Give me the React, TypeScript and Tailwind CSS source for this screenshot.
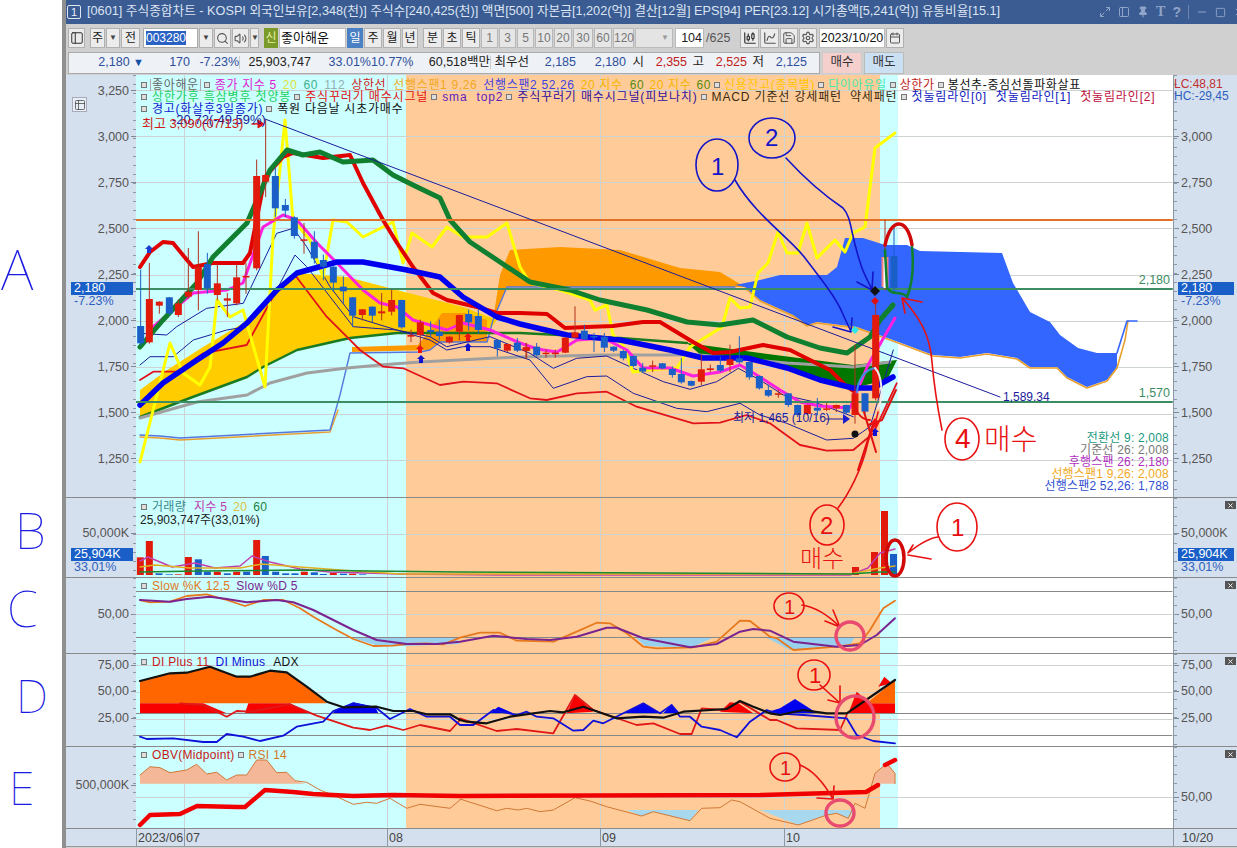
import type { ReactNode } from "react";
import { CandlestickChart, ChartSpline, Calendar, Maximize2, Minus, PanelLeft, Pin, Save, Search, Settings, Square, Table2, Volume2, X } from "lucide-react";

type Candle = [number, number, number, number, number, string];

// zoom crop coords -> page coords
const z = (ox: number, oy: number, pts: number[][]) =>
  pts.map(([x, y]) => `${(x / 3 + ox).toFixed(1)},${(y / 3 + oy).toFixed(1)}`).join(" ");

const RED = "#e21a0c";
const BLUE = "#1a5fc8";

// x(zoom), bodyTop, bodyBot, wickTop, wickBot
const candles3: Candle[] = [
  [32, 618, 670, 450, 675, BLUE], [58, 537, 667, 430, 670, RED], [88, 545, 557, 545, 580, RED], [118, 532, 580, 532, 585, BLUE],
  [145, 550, 585, 540, 590, RED], [175, 515, 530, 385, 535, RED], [205, 440, 510, 335, 570, RED], [232, 432, 505, 400, 520, BLUE],
  [262, 490, 525, 430, 540, RED], [292, 535, 542, 520, 590, RED], [320, 472, 550, 435, 555, RED], [348, 468, 472, 430, 520, RED],
  [380, 168, 445, 120, 450, RED], [407, 165, 185, 0, 230, RED], [436, 168, 265, 145, 290, BLUE], [466, 255, 272, 238, 290, BLUE],
  [493, 292, 348, 290, 355, BLUE], [522, 358, 362, 310, 400, RED], [553, 365, 415, 335, 430, BLUE], [580, 420, 440, 405, 480, BLUE],
  [610, 440, 488, 440, 515, BLUE], [640, 500, 514, 470, 550, BLUE], [668, 532, 587, 532, 620, BLUE], [697, 568, 585, 568, 600, RED],
  [727, 560, 587, 560, 605, BLUE], [755, 574, 580, 520, 600, RED], [785, 540, 575, 510, 585, RED], [815, 540, 622, 540, 625, BLUE],
  [843, 645, 650, 630, 665, RED], [871, 607, 645, 600, 680, RED], [902, 630, 636, 605, 650, BLUE], [928, 635, 648, 600, 660, BLUE],
  [958, 650, 667, 650, 670, RED], [988, 585, 635, 585, 660, RED], [1016, 582, 607, 570, 630, BLUE], [1045, 588, 630, 570, 640, BLUE],
  [1102, 660, 685, 660, 708, BLUE], [1132, 672, 692, 672, 695, RED], [1162, 668, 692, 655, 695, BLUE], [1190, 682, 692, 670, 715, RED],
];
const candles7: Candle[] = [
  [18, 142, 152, 130, 175, RED], [50, 140, 165, 130, 168, BLUE], [78, 158, 162, 150, 172, RED], [106, 158, 162, 150, 172, RED],
  [136, 113, 158, 113, 158, RED], [165, 97, 113, 20, 113, RED], [193, 92, 118, 75, 118, BLUE], [222, 108, 112, 100, 155, BLUE],
  [253, 110, 143, 100, 155, BLUE], [281, 140, 152, 140, 155, BLUE], [310, 153, 175, 150, 180, BLUE], [340, 168, 198, 168, 200, BLUE],
  [368, 203, 215, 190, 218, BLUE], [398, 196, 200, 183, 215, RED], [427, 190, 205, 190, 207, BLUE], [457, 207, 225, 200, 232, BLUE],
  [484, 222, 247, 175, 250, BLUE], [514, 243, 257, 243, 258, BLUE], [544, 208, 245, 165, 255, RED], [571, 205, 210, 195, 215, RED],
  [601, 195, 212, 170, 215, BLUE], [630, 178, 195, 135, 215, RED], [658, 175, 187, 110, 190, BLUE], [688, 186, 232, 186, 238, BLUE],
  [718, 228, 265, 228, 268, BLUE], [745, 270, 287, 255, 290, BLUE], [775, 280, 284, 270, 292, RED], [805, 280, 315, 280, 320, BLUE],
  [833, 315, 345, 315, 350, BLUE], [862, 315, 342, 315, 345, RED], [892, 323, 332, 295, 345, BLUE], [920, 325, 329, 310, 332, RED],
  [949, 315, 325, 315, 335, RED], [979, 315, 338, 315, 340, BLUE], [1005, 280, 345, 135, 370, RED], [1035, 280, 335, 280, 345, BLUE],
  [1067, 45, 295, 0, 300, RED],
];
const vols: [number, number, string][] = [
  [241, 187, RED], [268, 138, RED], [297, 235, BLUE], [328, 238, BLUE], [355, 238, RED], [385, 186, RED], [415, 193, BLUE], [442, 230, BLUE],
  [472, 230, RED], [502, 235, BLUE], [530, 230, RED], [560, 230, BLUE], [590, 135, RED], [616, 183, BLUE], [647, 230, BLUE], [677, 235, BLUE],
  [705, 235, BLUE], [733, 230, RED], [763, 232, BLUE], [790, 237, BLUE], [820, 233, RED], [850, 236, BLUE], [878, 236, RED], [908, 238, BLUE],
];

const redThick = "140,267 150,252 163,242 173,243 187,260 193,267 213,263 243,263 250,253 265,177 283,157 293,153 323,158 350,155 363,183 383,220 397,243 413,267 433,293 447,300 477,307 497,313 520,313 547,314 565,328 587,327 613,326 643,322 660,322 693,342 713,353 730,352 763,345 790,350 830,370 845,385 855,392";
const greenThick = "140,347 163,320 197,283 213,257 247,223 270,170 287,150 303,155 320,152 343,162 373,160 393,175 413,185 440,198 450,220 470,242 497,260 530,282 570,290 600,300 647,310 687,322 720,325 753,320 787,337 820,348 847,353 870,337 880,320 893,305";
const blueThick = "140,405 163,383 197,360 223,343 247,323 277,290 297,273 337,262 363,262 407,270 440,277 463,297 497,317 520,324 567,335 620,340 670,350 703,358 747,358 787,368 820,380 853,388 873,388 893,377";
const magenta = "153,327 173,310 193,293 227,290 243,283 263,227 283,215 297,220 317,243 337,263 363,290 380,303 397,307 413,320 447,330 463,323 490,330 520,343 537,349 557,352 577,340 603,338 627,350 643,368 670,368 693,376 720,372 740,365 760,377 780,390 800,402 820,406 850,408 868,365 895,318";
const yellow = "140,462 170,343 183,373 200,385 210,367 217,300 230,317 243,310 265,387 273,237 285,120 293,220 310,240 323,277 333,220 347,222 363,237 393,222 403,263 412,233 432,247 447,227 463,237 487,237 507,223 520,267 530,283 560,290 590,300 595,310 607,305 613,335 623,345 633,372 647,370 677,368 690,347 722,327 730,298 740,308 750,307 758,273 768,263 778,232 787,253 798,253 807,223 817,258 835,240 845,252 853,233 865,227 875,148 895,133";

const Kd = {
  k: z(60, 495, [[240, 315], [270, 322], [330, 320], [380, 303], [440, 298], [500, 315], [555, 333], [610, 315], [670, 315], [720, 340], [760, 365], [820, 400], [880, 432], [940, 453], [1000, 452], [1040, 447], [1100, 445], [1150, 448], [1200, 428]]) + " " + z(450, 495, [[90, 413], [150, 413], [200, 437], [310, 440], [380, 410], [440, 383], [480, 385], [530, 415], [580, 455], [620, 460], [730, 457], [800, 440], [870, 377], [900, 378], [960, 425]]) + " " + z(760, 495, [[50, 430], [100, 465], [230, 455], [300, 445], [330, 405], [370, 340], [405, 317]]),
  d: z(60, 495, [[240, 315], [330, 320], [380, 312], [450, 305], [500, 312], [560, 322], [650, 315], [700, 322], [760, 345], [820, 375], [880, 405], [950, 435], [1040, 447], [1130, 447], [1200, 440]]) + " " + z(450, 495, [[130, 422], [230, 432], [300, 435], [380, 425], [470, 398], [500, 398], [580, 430], [720, 457], [800, 447], [870, 410], [910, 402], [960, 407]]) + " " + z(760, 495, [[100, 440], [230, 455], [300, 450], [350, 420], [405, 370]]),
};
const Di = {
  adx: z(60, 495, [[240, 558], [330, 535], [380, 533], [450, 515], [530, 545], [570, 545], [630, 527], [680, 532], [740, 575], [800, 620], [850, 637], [950, 635], [1000, 648], [1060, 648], [1100, 658], [1170, 658], [1200, 675]]) + " " + z(450, 495, [[50, 680], [110, 685], [180, 665], [300, 648], [340, 652], [400, 635], [500, 670], [580, 665], [640, 668], [700, 650], [830, 642], [870, 618], [910, 635], [960, 655]]) + " " + z(760, 495, [[60, 660], [130, 645], [200, 655], [260, 655], [340, 600], [405, 555]]),
  plus: z(60, 495, [[360, 625], [430, 630], [500, 665], [530, 648], [570, 650], [690, 628], [770, 662], [880, 698], [930, 705], [980, 692], [1030, 705], [1080, 690], [1170, 708], [1200, 675]]) + " " + z(450, 495, [[30, 670], [140, 708], [200, 702], [310, 715], [375, 600], [430, 645], [560, 690], [610, 685], [690, 717], [725, 717], [755, 640], [820, 645], [870, 620], [960, 675]]) + " " + z(760, 495, [[50, 675], [110, 700], [240, 705], [260, 660]]),
  minus: z(60, 495, [[240, 725], [260, 732], [340, 730], [430, 741], [470, 741], [500, 717], [550, 725], [600, 738], [670, 722], [710, 695], [790, 680], [820, 648], [880, 625], [950, 640], [990, 672], [1050, 642], [1100, 665], [1170, 665], [1200, 690]]) + " " + z(450, 495, [[40, 690], [70, 690], [130, 645], [200, 660], [230, 650], [260, 665], [310, 670], [370, 707], [400, 705], [430, 677], [460, 685], [520, 655], [580, 625], [630, 655], [665, 630], [690, 665], [720, 665], [755, 695], [810, 705], [860, 727], [900, 680], [950, 645]]) + " " + z(760, 495, [[50, 655], [130, 660], [260, 670], [290, 720], [340, 738], [405, 745]]),
};
const rsi = z(60, 495, [[240, 840], [270, 815], [300, 818], [330, 833], [380, 825], [410, 808], [440, 837], [470, 832], [500, 855], [530, 840], [560, 840], [590, 795], [620, 795], [650, 833], [680, 832], [705, 857], [740, 862], [780, 885], [830, 905], [880, 928], [920, 922], [950, 925], [990, 910], [1040, 940], [1080, 928], [1170, 940], [1200, 915]]) + " " + z(450, 495, [[30, 912], [140, 947], [170, 940], [205, 945], [230, 940], [270, 950], [310, 945], [375, 908], [420, 918], [470, 935], [575, 963], [610, 950], [720, 977], [755, 940], [810, 938], [845, 915], [870, 920], [960, 970]]) + " " + z(760, 495, [[115, 990], [200, 960], [230, 955], [265, 970], [285, 925], [315, 940], [345, 835], [380, 805], [405, 835], [405, 866]]);

function Grid({ ys }: { ys: number[] }) {
  return (
    <g stroke="#cdd3d3" strokeWidth="1">
      {ys.map((y) => <line key={y} x1="136" x2="1172" y1={y + 0.5} y2={y + 0.5} />)}
      {[184, 387, 600, 784].map((x) => <line key={x} x1={x + 0.5} x2={x + 0.5} y1="0" y2="848" />)}
    </g>
  );
}

function Bands() {
  return (
    <div className="absolute inset-0 flex">
      <div className="w-[270px] bg-[#ccffff]" />
      <div className="w-[474px] bg-[#ffcc99]" />
      <div className="w-[18px] bg-[#ccffff]" />
      <div className="flex-1 bg-white" />
    </div>
  );
}

function Axis({ labels, pt, step, right }: { labels: string[]; pt: number; step: number; right?: boolean }) {
  return (
    <div className={right ? "relative flex h-full w-[64px] border-l border-[#8c98a6] bg-[#d5e0ee]" : "relative flex h-full w-[70px] justify-end bg-[#d5e0ee]"}>
      <div className={right ? "flex flex-col" : "flex flex-col items-end"} style={{ paddingTop: pt }}>
        {labels.map((l) => (
          <div key={l} className="flex h-[16px] items-center text-[12.5px] leading-none text-[#555]" style={{ marginBottom: step - 16 }}>
            {right && <span className="mr-[2px] h-px w-[5px] bg-[#7c8894]" />}
            {l}
            {!right && <span className="ml-[2px] h-px w-[5px] bg-[#7c8894]" />}
          </div>
        ))}
      </div>
      <div className={(right ? "left-0" : "right-0") + " absolute top-0 h-full w-[3px] bg-[repeating-linear-gradient(to_bottom,#8c98a6_0,#8c98a6_1px,transparent_1px,transparent_9px)]"} />
    </div>
  );
}

function Close() {
  return (
    <span className="absolute right-[1px] top-[3px] grid h-[8px] w-[11px] place-items-center bg-[#555]">
      <X className="h-[7px] w-[7px] text-white" strokeWidth={3} />
    </span>
  );
}

function Price({ v, sub, top }: { v: string; sub: string; top: number }) {
  return (
    <div className="absolute left-[5px] right-[3px] text-[12.5px] leading-[13px]" style={{ top }}>
      <div className="bg-[#1a5fc8] pl-[3px] text-white">{v}</div>
      <div className="pl-[3px] text-[#2d5fc0]">{sub}</div>
    </div>
  );
}

function Pane({ top, h, left, right, overlay, children }: { top: number; h: number; left: ReactNode; right: ReactNode; overlay?: ReactNode; children: ReactNode }) {
  return (
    <div className="flex border-b border-[#8a8a8a]" style={{ height: h }}>
      {left}
      <div className="relative min-w-0 flex-1 overflow-hidden">
        <Bands />
        <svg className="absolute left-0 top-0" width="1037" height={h} viewBox={`136 ${top} 1037 ${h}`} fill="none" strokeLinejoin="round" strokeLinecap="round">
          {children}
        </svg>
        {overlay}
      </div>
      {right}
    </div>
  );
}

function Candles() {
  const draw = (c: Candle, ox: number, oy: number) => {
    const x = c[0] / 3 + ox;
    return (
      <g key={`${ox}-${c[0]}`}>
        <line x1={x} x2={x} y1={c[3] / 3 + oy} y2={c[4] / 3 + oy} stroke={c[5] === RED ? "#b03020" : "#1a5fc8"} />
        <rect x={x - 3.5} y={c[1] / 3 + oy} width="7" height={Math.max(1.5, (c[2] - c[1]) / 3)} fill={c[5]} />
      </g>
    );
  };
  return (
    <>
      {candles3.map((c) => draw(c, 130, 120))}
      {candles7.map((c) => draw(c, 520, 300))}
      <line x1="885" x2="885" y1="220" y2="290" stroke="#b03020" />
      <rect x="881.5" y="257" width="7" height="30" fill="#f08080" />
      <rect x="883.5" y="258" width="3" height="30" fill="#fff" />
      <line x1="894" x2="894" y1="228" y2="292" stroke="#1a5fc8" />
      <rect x="890.5" y="256" width="7" height="32" fill="#1a5fc8" />
    </>
  );
}

function Mark({ x, y, c }: { x: number; y: number; c: string }) {
  return <path d={`M${x} ${y - 5}L${x + 4} ${y - 1}H${x + 2}V${y + 3}H${x - 2}V${y - 1}H${x - 4}Z`} fill={c} />;
}

function MainChart() {
  return (
    <>
      <Grid ys={[90, 136, 182, 228, 275, 321, 367, 414, 460]} />
      <polygon fill="#ffcc00" points="140,390 167,370 203,347 243,323 277,290 297,273 347,277 397,290 463,307 497,320 487,333 397,333 350,338 297,350 263,367 247,377 190,398 140,417" />
      <polygon fill="#ff9900" points="352,347 418,345 432,327 442,313 465,313 487,320 487,342 440,342 430,350 352,352" />
      <polygon fill="#ff9900" points="493,320 500,275 510,250 560,247 620,250 680,268 720,272 745,287 507,287" />
      <polygon fill="#3366ff" points="735,285 760,280 780,275 827,275 837,267 845,238 863,238 885,245 907,245 920,251 1002,253 1013,283 1030,312 1050,322 1060,335 1078,348 1097,353 1117,353 1117,367 1107,380 1087,387 1067,377 1057,367 1030,367 1017,358 987,353 960,357 933,355 893,340 857,327 817,322 807,325 793,315 760,300 745,287" />
      <polyline stroke="#e8a030" strokeWidth="1.6" points="745,288 760,301 793,316 807,326 817,323 857,328 893,341 933,356 960,358 987,354 1017,359 1030,368 1057,368 1067,378 1087,388 1107,381 1117,368 1125,340 1128,321" />
      <polyline stroke="#3366ff" strokeWidth="1.6" points="1117,353 1127,321 1137,321" />
      <polyline stroke="#e8a030" strokeWidth="1.4" points="140,437 160,438 180,440 330,432 338,410" />
      <polyline stroke="#5577dd" strokeWidth="1.4" points="140,435 160,436 180,438 330,430 340,395 350,353 420,352 430,350 440,342 487,342 493,320 507,287 735,287" />
      <polygon fill="#007700" points="687,343 753,352 853,365 897,360 887,380 853,388 787,368 747,358 703,357" />
      <polyline stroke="#1a7a20" strokeWidth="2.5" points="140,417 190,398 247,377 263,367 297,350 350,338 397,333 487,333 520,333 620,338 687,343" />
      <polyline stroke="#a0a0a0" strokeWidth="3" points="140,418 197,402 247,395 270,383 307,373 347,368 380,365 420,362 497,358 520,357 600,355 700,355 753,360 787,363 853,367 890,362" />
      <polyline stroke="#1c1c9c" strokeWidth="1" points={z(130, 120, [[30, 640], [110, 645], [140, 620], [230, 565], [340, 550], [440, 340], [490, 325], [530, 380], [600, 500], [670, 590], [800, 630], [900, 650], [950, 680], [1080, 650], [1200, 700]]) + " " + z(520, 300, [[100, 205], [170, 175], [260, 168], [340, 205], [430, 245], [510, 268], [590, 245], [655, 205], [720, 240], [790, 285], [880, 305], [1000, 350]])} />
      <polyline stroke="#1c1c9c" strokeWidth="1" points={z(130, 120, [[30, 735], [60, 710], [130, 710], [190, 660], [290, 630], [350, 620], [440, 510], [495, 405], [530, 440], [600, 530], [670, 620], [800, 630], [900, 660], [950, 690], [1000, 680], [1080, 680], [1200, 720]]) + " " + z(520, 300, [[100, 265], [200, 230], [260, 228], [340, 280], [470, 325], [560, 335], [660, 310], [720, 345], [800, 370], [920, 420], [1000, 415], [1050, 380], [1120, 150]])} />
      <polyline stroke="#e2121c" strokeWidth="1.8" points={z(130, 120, [[30, 780], [70, 755], [140, 755], [220, 700], [350, 675], [440, 510], [495, 465], [590, 590], [650, 650], [690, 690], [760, 740], [820, 745], [930, 795], [1000, 785], [1100, 790], [1200, 835]]) + " " + z(520, 300, [[80, 300], [170, 280], [260, 275], [350, 320], [520, 370], [600, 368], [680, 345], [750, 370], [840, 435], [920, 452], [1000, 450], [1060, 400], [1130, 250]])} />
      <polyline stroke="#ffff00" strokeWidth="3" points={yellow} />
      <polyline stroke="#e00000" strokeWidth="4" points={redThick} />
      <polyline stroke="#ff20e0" strokeWidth="3" points={magenta} />
      <polyline stroke="#108030" strokeWidth="5" points={greenThick} />
      <polyline stroke="#0000ee" strokeWidth="5.5" points={blueThick} />
      <line x1="136" x2="1172" y1="220" y2="220" stroke="#e0702a" strokeWidth="2" />
      <line x1="136" x2="1172" y1="289" y2="289" stroke="#3c8c64" strokeWidth="2" />
      <line x1="136" x2="1172" y1="402" y2="402" stroke="#3c8c64" strokeWidth="2" />
      <line x1="265" y1="119" x2="1000" y2="397" stroke="#1c1c9c" />
      <Candles />
      <Mark x={149} y={250} c="#1a3fd0" />
      <Mark x={420} y={350} c="#f01010" />
      <Mark x={421} y={360} c="#1010d0" />
      <Mark x={468} y={338} c="#f01010" />
      <Mark x={468} y={348} c="#1010d0" />
      <path d="M252 124H258V120L264 124L258 128V124Z" fill="#e01010" stroke="#e01010" />
      <line x1="826" y1="419" x2="846" y2="419" stroke="#1c1c9c" />
      <path d="M843 414L850 419L843 424Z" fill="#1c1cd0" />
    </>
  );
}

function Dot() {
  return <span className="mx-[3px] inline-block h-[6px] w-[6px] shrink-0 border border-[#777] bg-[#ddd]" />;
}

function Tag({ c, children, ml = 6 }: { c: string; children: ReactNode; ml?: number }) {
  return <span style={{ color: c, marginLeft: ml }}>{children}</span>;
}

function Row({ children, tracking = "tracking-[0.3px]" }: { children: ReactNode; tracking?: string }) {
  return <div className={"flex h-[12px] items-center whitespace-nowrap text-[12px] leading-[12px] " + tracking}>{children}</div>;
}

function MainLegend() {
  return (
    <>
      <div className="absolute left-[2px] top-[4px] flex flex-col">
        <Row tracking="tracking-[0.65px]">
          <Dot />
          <span className="border-x border-[#aaa] px-[1px] text-[#666]">좋아해운</span>
          <Dot />
          <Tag c="#e020d0" ml={2}>종가 지수 5</Tag>
          <Tag c="#e0e040">20</Tag>
          <Tag c="#40b090">60</Tag>
          <Tag c="#90b0b0">112</Tag>
          <Tag c="#d02020">상한선</Tag>
          <Tag c="#f0a820" ml={7}>선행스팬1 9,26</Tag>
          <Tag c="#4040e0" ml={6}>선행스팬2 52,26</Tag>
          <Tag c="#f5b400" ml={6}>20 지수</Tag>
          <Tag c="#5a8a10" ml={7}>60</Tag>
          <Tag c="#f5b400" ml={5}>20 지수</Tag>
          <Tag c="#5a8a10" ml={5}>60</Tag>
          <Dot />
          <Tag c="#ffc400" ml={1}>신용잔고(종목별)</Tag>
          <Dot />
          <Tag c="#40e8b0" ml={1}>다이아유일</Tag>
          <Dot />
          <Tag c="#c02020" ml={1}>상한가</Tag>
          <Dot />
          <Tag c="#111" ml={1}>봉선추-중심선돌파화살표</Tag>
        </Row>
        <Row tracking="tracking-[0.85px]">
          <Dot />
          <Tag c="#20d060" ml={2}>상한가후 흑삼병후 첫양봉</Tag>
          <Dot />
          <Tag c="#e01010" ml={2}>주식꾸러기 매수시그널</Tag>
          <Dot />
          <Tag c="#6020c0" ml={2}>sma</Tag>
          <Tag c="#6020c0" ml={9}>top2</Tag>
          <Dot />
          <Tag c="#3010a0" ml={2}>주식꾸러기 매수시그널(피보나치)</Tag>
          <Dot />
          <Tag c="#3a2a10" ml={2}>MACD 기준선 강세패턴</Tag>
          <Tag c="#3a2a10" ml={8}>약세패턴</Tag>
          <Dot />
          <Tag c="#1020c0" ml={2}>첫눌림라인[0]</Tag>
          <Tag c="#1020c0" ml={9}>첫눌림라인[1]</Tag>
          <Tag c="#c01040" ml={9}>첫눌림라인[2]</Tag>
        </Row>
        <Row tracking="tracking-[0.75px]">
          <Dot />
          <Tag c="#1020d0" ml={2}>경고(화살후3일종가)</Tag>
          <Dot />
          <Tag c="#111" ml={2}>폭원 다음날 시초가매수</Tag>
        </Row>
      </div>
      <span className="absolute left-[36px] top-[38px] whitespace-nowrap text-[13px] leading-none text-[#1c1c9c]">-20.72(-49.59%)</span>
      <span className="absolute left-[6px] top-[42px] whitespace-nowrap text-[13px] leading-none text-[#d01818]">최고 3,090(07/13)</span>
      <span className="absolute left-[597px] top-[337px] whitespace-nowrap text-[12px] leading-none text-[#1c1c9c]">최저 1,465 (10/16)</span>
      <span className="absolute left-[867px] top-[316px] whitespace-nowrap text-[12px] leading-none text-[#1c1c9c]">1,589.34</span>
      <span className="absolute right-[3px] top-[199px] text-[12.5px] leading-none text-[#3c8c64]">2,180</span>
      <span className="absolute right-[3px] top-[312px] text-[12.5px] leading-none text-[#3c8c64]">1,570</span>
      <div className="absolute bottom-[5px] right-[4px] flex flex-col items-end whitespace-nowrap text-[12px] leading-[12px] tracking-[0.2px]">
        <span className="text-[#1a9a80]">전환선 9: 2,008</span>
        <span className="text-[#777]">기준선 26: 2,008</span>
        <span className="text-[#b030c0]">후행스팬 26: 2,180</span>
        <span className="text-[#f0a820]">선행스팬1 9,26: 2,008</span>
        <span className="text-[#3050d0]">선행스팬2 52,26: 1,788</span>
      </div>
    </>
  );
}

function Btn({ w, children, active, dim }: { w: number; children?: ReactNode; active?: boolean; dim?: boolean }) {
  return (
    <div
      className={
        "grid h-[20px] shrink-0 place-items-center border text-[12px] leading-none " +
        (active ? "border-[#4a7fc0] bg-[#4a80c4] text-white" : dim ? "border-[#b8b8b8] bg-[#e6e6e6] text-[#777]" : "border-[#b0b0b0] bg-[#ececec] text-[#222]")
      }
      style={{ width: w }}
    >
      {children}
    </div>
  );
}

const Tri = () => <span className="text-[8px] leading-none text-[#444]">▼</span>;

function Toolbar() {
  return (
    <div className="flex h-[26px] items-center gap-[1px] bg-[#d0d0d0] pl-[2px] pt-[2px]">
      <Btn w={17}><PanelLeft className="h-[14px] w-[14px]" strokeWidth={1.6} /></Btn>
      <div className="w-[3px]" />
      <Btn w={15}>주</Btn>
      <Btn w={14}><Tri /></Btn>
      <Btn w={19}>전</Btn>
      <div className="ml-[2px] flex h-[20px] w-[55px] items-center border border-[#aaa] bg-white pl-[2px] text-[12px]"><span className="bg-[#2a62c4] leading-[14px] text-white">003280</span></div>
      <Btn w={14}><Tri /></Btn>
      <Btn w={17}><Search className="h-[13px] w-[13px] text-[#555]" /></Btn>
      <Btn w={17}><Volume2 className="h-[13px] w-[13px] text-[#555]" /></Btn>
      <Btn w={9}><Tri /></Btn>
      <div className="ml-[4px] grid h-[20px] w-[14px] place-items-center bg-[#7a9a2a] text-[12px] text-[#e8f0a0]">신</div>
      <div className="flex h-[20px] w-[67px] items-center border border-[#bbb] bg-white pl-[1px] text-[13px] text-[#111]">좋아해운</div>
      <Btn w={16} active>일</Btn>
      <Btn w={18}>주</Btn>
      <Btn w={18}>월</Btn>
      <Btn w={16}>년</Btn>
      <div className="w-[3px]" />
      <Btn w={19}>분</Btn>
      <Btn w={18}>초</Btn>
      <Btn w={18}>틱</Btn>
      {[["1", 17], ["3", 17], ["5", 17], ["10", 18], ["20", 18], ["30", 20], ["60", 18], ["120", 21]].map(([t, w]) => (
        <Btn key={t} w={w as number} dim>{t}</Btn>
      ))}
      <div className="flex h-[20px] w-[38px] items-center justify-end border border-[#bbb] bg-[#e4e4e4] pr-[3px]"><span className="text-[8px] text-[#999]">▼</span></div>
      <div className="ml-[1px] flex h-[20px] w-[29px] items-center justify-end border border-[#bbb] bg-white pr-[1px] text-[12.5px] text-[#222]">104</div>
      <span className="ml-[1px] w-[33px] text-[12.5px] text-[#555]">/625</span>
      <Btn w={19}><CandlestickChart className="h-[14px] w-[14px] text-[#333]" /></Btn>
      <Btn w={19}><ChartSpline className="h-[14px] w-[14px] text-[#555]" /></Btn>
      <Btn w={18}><Save className="h-[14px] w-[14px] text-[#444]" strokeWidth={1.5} /></Btn>
      <Btn w={18}><Settings className="h-[14px] w-[14px] text-[#555]" /></Btn>
      <div className="ml-[1px] flex h-[20px] w-[66px] items-center justify-center border border-[#bbb] bg-white text-[12.5px] text-[#111]">2023/10/20</div>
      <Btn w={18}><Calendar className="h-[12px] w-[12px] text-[#555]" /></Btn>
    </div>
  );
}

function Cell({ w, c = "text-[#2d4f9e]", children, b }: { w: number; c?: string; children: ReactNode; b?: boolean }) {
  return <div className={"shrink-0 whitespace-nowrap text-right " + c + (b ? " border-r border-[#ccc]" : "")} style={{ width: w }}>{children}</div>;
}

function Quote() {
  return (
    <div className="flex h-[25px] items-center bg-[#d0d0d0] pl-[2px]">
      <div className="flex h-[22px] w-[752px] items-center border border-[#aaa] bg-[#eef1f5] text-[12.5px] leading-none">
        <Cell w={75}>2,180 <span className="text-[11px] text-[#1a4fa8]">▼</span></Cell>
        <Cell w={46}>170</Cell>
        <Cell w={50} b>-7.23%</Cell>
        <Cell w={71} c="text-[#222]">25,903,747</Cell>
        <Cell w={60}>33.01%</Cell>
        <Cell w={40} b>10.77%</Cell>
        <Cell w={80} c="text-[#222]" b>60,518백만</Cell>
        <Cell w={38} c="text-[#222]">최우선</Cell>
        <Cell w={47}>2,185</Cell>
        <Cell w={50}>2,180</Cell>
        <Cell w={5} b>{""}</Cell>
        <Cell w={13} c="text-[#222]">시</Cell>
        <Cell w={43} c="text-[#c02020]">2,355</Cell>
        <Cell w={17} c="text-[#222]">고</Cell>
        <Cell w={43} c="text-[#c02020]">2,525</Cell>
        <Cell w={17} c="text-[#222]">저</Cell>
        <Cell w={43}>2,125</Cell>
      </div>
      <div className="ml-[2px] grid h-[22px] w-[40px] place-items-center border border-[#ccc] bg-[#f4cfcc] text-[12.5px] text-[#333]">매수</div>
      <div className="ml-[2px] grid h-[22px] w-[40px] place-items-center border border-[#bbb] bg-[#cce0f4] text-[12.5px] text-[#333]">매도</div>
    </div>
  );
}

function Annotations() {
  return (
    <svg className="pointer-events-none absolute left-0 top-0" width="1237" height="848" viewBox="0 0 1237 848" fill="none" strokeLinecap="round" strokeLinejoin="round">
      {/* blue notes */}
      <g stroke="#1414c8" strokeWidth="1.6">
        <ellipse cx="717" cy="165" rx="21" ry="26" />
        <ellipse cx="772" cy="138" rx="23" ry="20" />
        <path d="M735 180C755 215 790 238 805 258C822 280 836 298 842 312C846 322 850 328 851 332L833 327M851 332L852 318" />
        <path d="M786 158C808 182 828 198 843 208C852 218 850 232 860 262C864 276 870 284 872 290L857 282M872 290L873 272" />
      </g>
      <g fontFamily="'Liberation Sans', sans-serif" fontSize="24" fill="#1414c8" stroke="none">
        <text x="711" y="175">1</text>
        <text x="765" y="146">2</text>
      </g>
      <path d="M875 286L880 291L875 296L870 291Z" fill="#111" />
      <path d="M875 297L879 301L875 305L871 301Z" fill="#e01010" />
      <path d="M855 326L859 330L855 334L851 330Z" fill="#30e8e8" />
      {/* around last candles */}
      <g strokeWidth="2">
        <path d="M857 392C858 380 864 370 875 368" stroke="#3a90e0" />
        <path d="M875 368C882 375 884 398 878 408" stroke="#f4e8e8" />
        <path d="M854 392C852 412 862 420 870 420" stroke="#e01010" />
        <path d="M896 390L882 420L868 425M864 412L876 452M873 424L858 470" stroke="#e01010" />
      </g>
      <circle cx="855" cy="434" r="3.5" fill="#111" />
      <path d="M875 418L879 423L875 428L871 423Z" fill="#f01010" />
      <Mark x={875} y={433} c="#1010d0" />
      {/* big ellipse and 4 */}
      <path d="M885 245C888 232 893 224 899 224C905 224 910 232 912 245" stroke="#d00808" strokeWidth="3.5" />
      <path d="M912 247C914 268 912 285 907 297C902 290 892 296 888 289M885 250L887 288" stroke="#108030" strokeWidth="2.6" />
      <g stroke="#e81010" strokeWidth="1.6">
        <path d="M902 298L922 302M902 298L905 313" />
        <path d="M903 299C920 318 930 335 932 362C934 385 937 405 942 430" />
        <ellipse cx="962" cy="439" rx="17" ry="21" />
        <ellipse cx="827" cy="525" rx="17" ry="20" />
        <path d="M838 508C848 495 862 470 868 442C872 430 877 420 878 412" />
        <ellipse cx="957" cy="527" rx="20" ry="24" />
        <path d="M938 537C930 538 918 545 908 553L913 545M908 555L931 559" />
        <ellipse cx="789" cy="606" rx="15" ry="13" />
        <path d="M802 605C815 607 828 615 840 627L833 610M840 627L825 621" />
        <ellipse cx="814" cy="675" rx="16" ry="15" />
        <path d="M820 685L840 703L840 686M840 703L828 700" />
        <ellipse cx="785" cy="767" rx="15" ry="14" />
        <path d="M800 765C813 770 825 785 833 799L834 786M833 799L817 798" />
      </g>
      <ellipse cx="895" cy="558" rx="9" ry="18" stroke="#d00808" strokeWidth="3.5" />
      <g stroke="#e84a70" strokeWidth="3.4">
        <circle cx="850" cy="636" r="14" />
        <ellipse cx="855" cy="717" rx="19" ry="21" />
        <ellipse cx="840" cy="813" rx="14" ry="13" />
      </g>
      <g fontFamily="'Liberation Sans', sans-serif" fontSize="24" fill="#e81010" stroke="none">
        <text x="955" y="448" fontSize="28">4</text>
        <text x="820" y="534">2</text>
        <text x="951" y="536">1</text>
        <text x="784" y="614" fontSize="20">1</text>
        <text x="809" y="683" fontSize="22">1</text>
        <text x="780" y="775" fontSize="20">1</text>
      </g>
      <g fontFamily="'Noto Sans CJK KR', sans-serif" fill="#e81010" stroke="none" fontWeight="300">
        <text x="984" y="450" fontSize="29">매수</text>
        <text x="800" y="567" fontSize="24">매수</text>
      </g>
    </svg>
  );
}

function Vol() {
  const bars = vols.map(([x, y, c]) => <rect key={x} x={x / 3 + 56.5} y={y / 3 + 495} width="7" height={575 - (y / 3 + 495)} fill={c} />);
  return (
    <Pane
      top={498}
      h={80}
      left={<div className="relative"><Axis pt={27} step={46} labels={["50,000K"]} /><Price v="25,904K" sub="33,01%" top={50} /></div>}
      right={<div className="relative"><Axis right pt={27} step={46} labels={["50,000K"]} /><Close /><Price v="25,904K" sub="33,01%" top={50} /></div>}
      overlay={
        <div className="absolute left-[2px] top-[3px] flex flex-col">
          <Row>
            <Dot />
            <Tag c="#3a8a8a" ml={2}>거래량</Tag>
            <Tag c="#c040b0" ml={8}>지수 5</Tag>
            <Tag c="#e0c040">20</Tag>
            <Tag c="#208040">60</Tag>
          </Row>
          <span className="ml-[2px] mt-[1px] whitespace-nowrap text-[12px] leading-[12px] text-[#222]">25,903,747주(33,01%)</span>
        </div>
      }
    >
      <Grid ys={[534]} />
      {bars}
      <rect x="852" y="567" width="7" height="8" fill={RED} />
      <rect x="871" y="552" width="7" height="23" fill={RED} />
      <rect x="881" y="511" width="7" height="64" fill={RED} />
      <rect x="890" y="554" width="7" height="21" fill="#1a5fc8" />
      <polyline stroke="#c040b0" strokeWidth="1.5" points="140,561 148,557 160,562 172,567 195,563 215,568 240,566 252,556 270,562 300,569 330,572 400,574 500,575 850,575 868,568 880,553 895,549" />
      <polyline stroke="#e0b020" strokeWidth="1.5" points="140,567 155,565 190,568 240,568 262,564 300,567 340,570 400,574 850,574 880,568 895,566" />
      <polyline stroke="#1a8a30" strokeWidth="1.5" points="140,572 200,571 300,570 370,571 460,572 850,574 880,572 895,572" />
    </Pane>
  );
}

function Slow() {
  return (
    <Pane
      top={578}
      h={76}
      left={<Axis pt={28} step={30} labels={["50,00"]} />}
      right={<div className="relative"><Axis right pt={28} step={30} labels={["50,00"]} /><Close /></div>}
      overlay={
        <div className="absolute left-[2px] top-[2px]">
          <Row>
            <Dot />
            <Tag c="#e0781c" ml={2}>Slow %K 12,5</Tag>
            <Tag c="#7a2490">Slow %D 5</Tag>
          </Row>
        </div>
      }
    >
      <Grid ys={[614]} />
      <polygon fill="#99d0ee" points="350,637 375,645 405,646 460,644 455,637" />
      <polygon fill="#99d0ee" points="635,637 645,646 690,648 715,637" />
      <polygon fill="#99d0ee" points="765,637 790,650 850,645 855,637" />
      <line x1="136" x2="1172" y1="591.5" y2="591.5" stroke="#888" />
      <line x1="136" x2="1172" y1="637.5" y2="637.5" stroke="#888" />
      <polyline stroke="#e8781c" strokeWidth="1.8" points={Kd.k} />
      <polyline stroke="#7a2490" strokeWidth="2" points={Kd.d} />
    </Pane>
  );
}

function DiPane() {
  return (
    <Pane
      top={654}
      h={93}
      left={<Axis pt={3} step={26.7} labels={["75,00", "50,00", "25,00"]} />}
      right={<div className="relative"><Axis right pt={3} step={26.7} labels={["75,00", "50,00", "25,00"]} /><Close /></div>}
      overlay={
        <div className="absolute left-[2px] top-[2px]">
          <Row>
            <Dot />
            <Tag c="#c81818" ml={2}>DI Plus 11</Tag>
            <Tag c="#1010d8">DI Minus</Tag>
            <Tag c="#111" ml={8}>ADX</Tag>
          </Row>
        </div>
      }
    >
      <Grid ys={[665, 692, 719]} />
      <polygon fill="#ff6600" points={z(60, 495, [[240, 625], [240, 558], [330, 535], [380, 533], [450, 515], [530, 545], [570, 545], [630, 527], [680, 532], [740, 575], [800, 625]])} />
      <polygon fill="#f80000" points={z(60, 495, [[240, 625], [430, 625], [500, 655], [240, 655]])} />
      <polygon fill="#f80000" points={z(60, 495, [[565, 625], [690, 625], [750, 655], [555, 655]])} />
      <polygon fill="#0000ee" points={z(60, 495, [[820, 650], [880, 622], [945, 635], [955, 655], [820, 655]])} />
      <polygon fill="#0000ee" points={z(450, 495, [[120, 655], [145, 635], [190, 655]])} />
      <polygon fill="#0000ee" points={z(450, 495, [[520, 655], [580, 625], [630, 655]])} />
      <polygon fill="#0000ee" points={z(450, 495, [[640, 655], [665, 628], [690, 655]])} />
      <polygon fill="#f80000" points={z(450, 495, [[350, 655], [375, 600], [430, 650]])} />
      <polygon fill="#f80000" points={z(450, 495, [[810, 650], [840, 622], [865, 625], [910, 655]])} />
      <polygon fill="#0000ee" points={z(760, 495, [[10, 655], [60, 640], [105, 612], [165, 650], [180, 655]])} />
      <polygon fill="#f80000" points={z(760, 495, [[265, 655], [290, 590], [330, 625], [405, 625], [405, 655]])} />
      <polygon fill="#ff6600" points={z(760, 495, [[320, 625], [405, 555], [405, 625]])} />
      <polygon fill="#f80000" points={z(760, 495, [[355, 575], [373, 545], [395, 565]])} />
      <line x1="136" x2="1172" y1="713.5" y2="713.5" stroke="#888" />
      <line x1="136" x2="1172" y1="735.5" y2="735.5" stroke="#888" />
      <polyline stroke="#e01818" strokeWidth="1.8" points={Di.plus} />
      <polyline stroke="#1010d8" strokeWidth="1.8" points={Di.minus} />
      <polyline stroke="#111" strokeWidth="2.2" points={Di.adx} />
    </Pane>
  );
}

function Obv() {
  return (
    <Pane
      top={747}
      h={82}
      left={<Axis pt={30} step={30} labels={["500,000K"]} />}
      right={<div className="relative"><Axis right pt={42} step={30} labels={["50,00"]} /><Close /></div>}
      overlay={
        <div className="absolute left-[2px] top-[2px]">
          <Row>
            <Dot />
            <Tag c="#c81818" ml={2}>OBV(Midpoint)</Tag>
            <Dot />
            <Tag c="#d07828" ml={2}>RSI 14</Tag>
          </Row>
        </div>
      }
    >
      <Grid ys={[797]} />
      <polygon fill="#f4b898" points={z(60, 495, [[240, 866], [240, 840], [270, 815], [300, 818], [330, 833], [380, 825], [410, 808], [440, 837], [470, 832], [500, 855], [530, 840], [560, 840], [590, 795], [620, 795], [650, 833], [680, 832], [705, 857], [735, 866]])} />
      <polygon fill="#f4b898" points={z(760, 495, [[335, 866], [345, 835], [380, 805], [405, 835], [405, 866]])} />
      <polygon fill="#a8d8ee" points={z(450, 495, [[530, 945], [575, 963], [610, 950], [720, 977], [745, 945]])} />
      <polygon fill="#a8d8ee" points={z(760, 495, [[0, 945], [115, 990], [200, 960], [230, 955], [265, 970], [285, 945]])} />
      <polyline stroke="#d07838" strokeWidth="1" points={rsi} />
      <polyline stroke="#f00000" strokeWidth="4.5" points="140,825 150,815 180,814 197,806 237,807 245,807 265,790 293,792 313,794 353,796 393,795 460,796 760,795 866,792 878,785" />
      <polyline stroke="#f00000" strokeWidth="4.5" points="885,765 895,760" />
    </Pane>
  );
}

export default function App() {
  return (
    <div className="relative flex h-[848px] w-[1237px] overflow-hidden bg-white" style={{ fontFamily: "'Liberation Sans', 'Noto Sans CJK KR', sans-serif" }}>
      <div className="relative w-[62px] shrink-0 text-[#1a1ae0]" style={{ fontFamily: "'Noto Sans', sans-serif" }}>
        <span className="absolute left-[1px] top-[240px] text-[56px] font-thin leading-none">A</span>
        <span className="absolute left-[15px] top-[505px] text-[50px] font-thin leading-none">B</span>
        <span className="absolute left-[7px] top-[583px] text-[50px] font-thin leading-none">C</span>
        <span className="absolute left-[16px] top-[672px] text-[46px] font-thin leading-none">D</span>
        <span className="absolute left-[9px] top-[764px] text-[46px] font-thin leading-none">E</span>
      </div>

      <div className="flex w-[1175px] shrink-0 flex-col border-l-[4px] border-l-[#8f8f8f] bg-[#d0d0d0]">
        <div className="flex h-[24px] items-center bg-[#3a5c92] pl-[1px]">
          <span className="grid h-[14px] w-[14px] place-items-center rounded-[2px] border border-[#dfe6f2] text-[11px] leading-none text-[#eef]">1</span>
          <span className="ml-[6px] whitespace-nowrap text-[12.7px] text-[#dde4f2]">
            [0601] 주식종합차트 - KOSPI 외국인보유[2,348(천)] 주식수[240,425(천)] 액면[500] 자본금[1,202(억)] 결산[12월] EPS[94] PER[23.12] 시가총액[5,241(억)] 유통비율[15.1]
          </span>
          <div className="ml-auto flex items-center gap-[7px] text-[#8fa4c8]">
            <Maximize2 className="h-[12px] w-[12px]" />
            <PanelLeft className="h-[12px] w-[12px]" />
            <Pin className="h-[12px] w-[12px] fill-[#8fa4c8]" />
            <span className="text-[14px] font-bold leading-none" style={{ fontFamily: "'Liberation Serif', serif" }}>T</span>
            <span className="text-[14px] font-bold leading-none">?</span>
            <span className="h-[14px] w-px bg-[#6f86ac]" />
            <Minus className="h-[12px] w-[12px]" />
            <Square className="h-[11px] w-[11px]" />
            <X className="mr-[-8px] h-[12px] w-[12px]" />
          </div>
        </div>
        <Toolbar />
        <Quote />

        <Pane
          top={75}
          h={423}
          overlay={<MainLegend />}
          left={
            <div className="relative">
              <Axis pt={8} step={46.25} labels={["3,250", "3,000", "2,750", "2,500", "2,250", "2,000", "1,750", "1,500", "1,250"]} />
              <span className="absolute left-[6px] top-[22px] grid h-[15px] w-[15px] place-items-center border border-[#aab] bg-[#e8eef6]"><Table2 className="h-[12px] w-[12px] text-[#444]" strokeWidth={1.5} /></span>
              <Price v="2,180" sub="-7.23%" top={207} />
            </div>
          }
          right={
            <div className="relative">
              <Axis right pt={54} step={46.25} labels={["3,000", "2,750", "2,500", "2,250", "2,000", "1,750", "1,500", "1,250"]} />
              <div className="absolute left-[1px] top-[3px] text-[12px] leading-[12px]">
                <div className="text-[#c03030]">LC:48,81</div>
                <div className="text-[#2d5fc0]">HC:-29,45</div>
              </div>
              <Price v="2,180" sub="-7.23%" top={207} />
            </div>
          }
        >
          <MainChart />
        </Pane>
        <Vol />
        <Slow />
        <DiPane />
        <Obv />

        <div className="flex h-[18px] border-b border-[#999] bg-[#d5e0ee] text-[12.5px] leading-[18px] text-[#444]">
          <div className="w-[70px]" />
          {[["2023/06", 48], ["07", 203], ["08", 213], ["09", 184], ["10", 389]].map(([t, w]) => (
            <div key={t} className="border-l border-[#8c98a6] pl-[1px]" style={{ width: w as number }}>{t}</div>
          ))}
          <div className="border-l border-[#8c98a6] pl-[8px]">10/20</div>
        </div>
      </div>
      <Annotations />
    </div>
  );
}
